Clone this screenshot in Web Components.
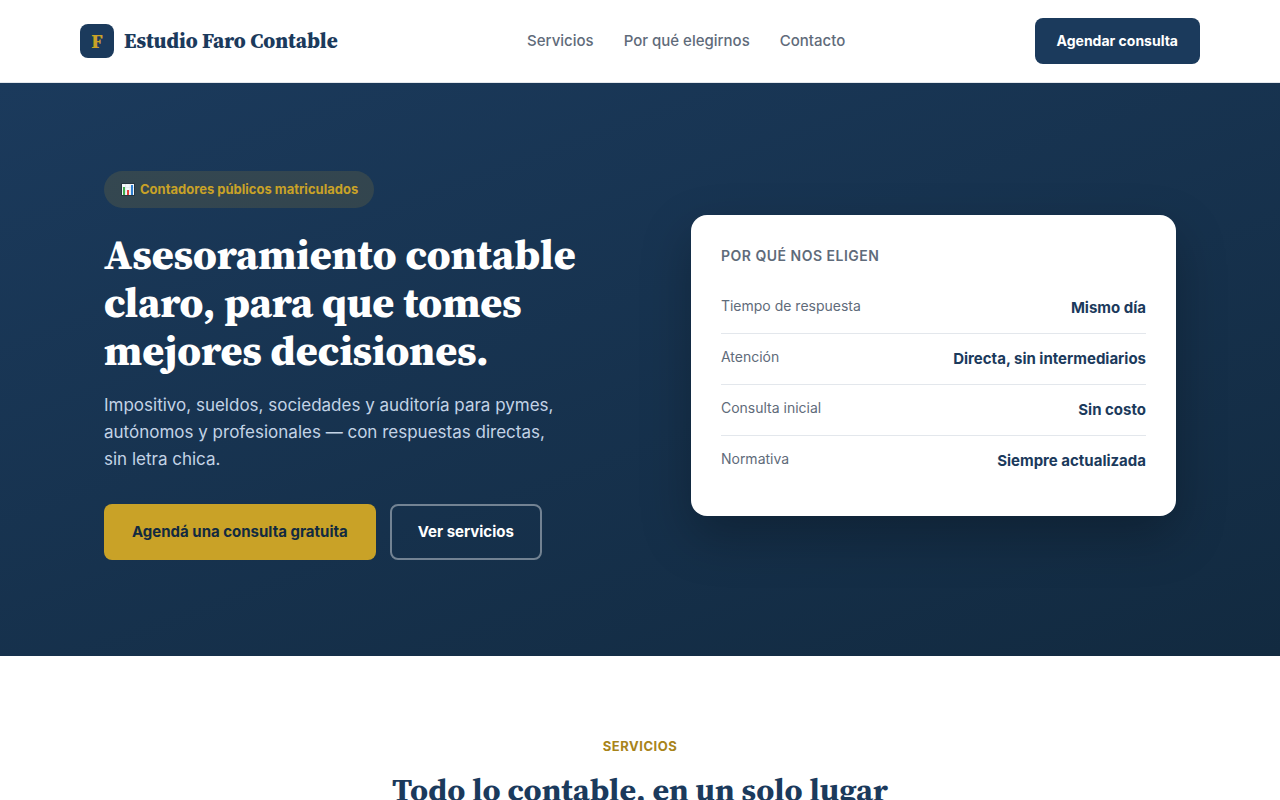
<!DOCTYPE html>
<html lang="es">
<head>
<meta charset="utf-8">
<meta name="viewport" content="width=device-width, initial-scale=1">
<title>Estudio Faro Contable</title>
<style>
  :root {
    --navy: #1b3a5c;
    --navy-dark: #122a40;
    --gold: #c9a227;
    --gold-dark: #a8841a;
    --muted: #5f6b7a;
    --line: #e3e7ec;
    --serif: 'Source Serif 4', 'Noto Serif CJK SC', 'Liberation Serif', serif;
  }
  body {
    margin: 0;
    background: #fff;
    color: var(--navy);
    font-family: Inter, 'Liberation Sans', sans-serif;
    font-size: 16px;
    line-height: 1.6;
  }
</style>
</head>
<body>
<site-header>
  <nav-link href="#servicios">Servicios</nav-link>
  <nav-link href="#elegirnos">Por qué elegirnos</nav-link>
  <nav-link href="#contacto">Contacto</nav-link>
  <link-button slot="action" href="#contacto" kind="small">Agendar consulta</link-button>
</site-header>
<main>
  <hero-banner>
    <hero-pill slot="pill">Contadores públicos matriculados</hero-pill>
    <span slot="title">Asesoramiento contable claro, para que tomes mejores decisiones.</span>
    <span slot="lead">Impositivo, sueldos, sociedades y auditoría para pymes, autónomos y profesionales — con respuestas directas, sin letra chica.</span>
    <link-button slot="actions" href="#contacto" kind="gold">Agendá una consulta gratuita</link-button>
    <link-button slot="actions" href="#servicios" kind="outline">Ver servicios</link-button>
    <info-card slot="aside" id="elegirnos" heading="Por qué nos eligen">
      <info-row label="Tiempo de respuesta">Mismo día</info-row>
      <info-row label="Atención">Directa, sin intermediarios</info-row>
      <info-row label="Consulta inicial">Sin costo</info-row>
      <info-row label="Normativa">Siempre actualizada</info-row>
    </info-card>
  </hero-banner>
  <page-section id="servicios" eyebrow="Servicios">Todo lo contable, en un solo lugar</page-section>
</main>

<script>
class SiteHeader extends HTMLElement {
  constructor() {
    super();
    this.attachShadow({ mode: 'open' });
    this.shadowRoot.innerHTML = `
      <style>
        :host {
          display: block;
          background: #fff;
          border-bottom: 1px solid var(--line);
        }
        header {
          max-width: 1120px;
          margin: 0 auto;
          padding: 18px 24px;
          display: flex;
          justify-content: space-between;
          align-items: center;
        }
        .brand {
          display: flex;
          align-items: center;
          gap: 10px;
          color: var(--navy);
          font-family: var(--serif);
          font-size: 21px;
          font-weight: 800;
          line-height: 32px;
          text-decoration: none;
        }
        .mark {
          display: grid;
          place-items: center;
          width: 34px;
          height: 34px;
          border-radius: 8px;
          background: var(--navy);
          color: var(--gold);
          font-size: 20px;
        }
        nav {
          display: flex;
          gap: 30px;
        }
      </style>
      <header>
        <a class="brand" href="#"><span class="mark">F</span><span>Estudio Faro Contable</span></a>
        <nav><slot></slot></nav>
        <slot name="action"></slot>
      </header>
    `;
  }
}

class NavLink extends HTMLElement {
  constructor() {
    super();
    this.attachShadow({ mode: 'open' });
    this.shadowRoot.innerHTML = `
      <style>
        :host { display: block; }
        a {
          color: var(--muted);
          font-size: 15px;
          font-weight: 500;
          text-decoration: none;
        }
        a:hover { color: var(--navy); }
      </style>
      <a><slot></slot></a>
    `;
  }

  connectedCallback() {
    this.shadowRoot.querySelector('a').href = this.getAttribute('href');
  }
}

class LinkButton extends HTMLElement {
  constructor() {
    super();
    this.attachShadow({ mode: 'open' });
    this.shadowRoot.innerHTML = `
      <style>
        :host { display: block; }
        a {
          display: block;
          border-radius: 8px;
          font-size: 15px;
          font-weight: 700;
          line-height: 24px;
          text-decoration: none;
          white-space: nowrap;
        }
        :host([kind="small"]) a {
          padding: 12px 22px;
          background: var(--navy);
          color: #fff;
          font-size: 14px;
          line-height: 22px;
        }
        :host([kind="gold"]) a {
          padding: 16px 28px;
          background: var(--gold);
          color: var(--navy-dark);
        }
        :host([kind="outline"]) a {
          padding: 14px 26px;
          border: 2px solid rgba(255, 255, 255, 0.4);
          color: #fff;
        }
      </style>
      <a><slot></slot></a>
    `;
  }

  connectedCallback() {
    this.shadowRoot.querySelector('a').href = this.getAttribute('href');
  }
}

class HeroPill extends HTMLElement {
  constructor() {
    super();
    this.attachShadow({ mode: 'open' });
    this.shadowRoot.innerHTML = `
      <style>
        :host {
          display: inline-flex;
          align-items: center;
          gap: 4px;
          padding: 8px 16px;
          border-radius: 20px;
          background: rgba(201, 162, 39, 0.15);
          color: var(--gold);
          font-size: 13px;
          font-weight: 700;
          line-height: 21px;
        }
        svg { display: block; }
      </style>
      <svg width="16" height="16" viewBox="0 0 16 16" aria-hidden="true">
        <rect x="1" y="1" width="14" height="13" rx="1" fill="#26343f"/>
        <rect x="2" y="2" width="12" height="11" fill="#f4f7fa"/>
        <path d="M2 5.5h12M2 9h12M5.5 2v11M10 2v11" stroke="#d5dde4" stroke-width=".5"/>
        <rect x="3" y="5" width="2" height="8" fill="#3faa4a"/>
        <rect x="7" y="8" width="2" height="5" fill="#e0403a"/>
        <rect x="11" y="3" width="2" height="10" fill="#2f7fd0"/>
      </svg>
      <span><slot></slot></span>
    `;
  }
}

class HeroBanner extends HTMLElement {
  constructor() {
    super();
    this.attachShadow({ mode: 'open' });
    this.shadowRoot.innerHTML = `
      <style>
        :host {
          display: block;
          background: linear-gradient(160deg, var(--navy) 0%, var(--navy-dark) 100%);
          color: #fff;
        }
        .inner {
          box-sizing: border-box;
          max-width: 1120px;
          margin: 0 auto;
          padding: 88px 24px 96px;
          display: grid;
          grid-template-columns: 1fr 0.9fr;
          gap: 48px;
          align-items: center;
        }
        .pill { display: flex; }
        h1 {
          margin: 22px 0 18px;
          font-family: var(--serif);
          font-size: 42px;
          font-weight: 800;
          line-height: 48px;
        }
        p {
          max-width: 460px;
          margin: 0 0 30px;
          color: #c3d3e6;
          font-size: 17px;
        }
        .actions {
          display: flex;
          flex-wrap: wrap;
          gap: 14px;
        }
        @media (max-width: 860px) {
          .inner { grid-template-columns: 1fr; }
        }
      </style>
      <div class="inner">
        <div>
          <div class="pill"><slot name="pill"></slot></div>
          <h1><slot name="title"></slot></h1>
          <p><slot name="lead"></slot></p>
          <div class="actions"><slot name="actions"></slot></div>
        </div>
        <slot name="aside"></slot>
      </div>
    `;
  }
}

class InfoCard extends HTMLElement {
  constructor() {
    super();
    this.attachShadow({ mode: 'open' });
    this.shadowRoot.innerHTML = `
      <style>
        :host {
          display: block;
          padding: 30px;
          border-radius: 16px;
          background: #fff;
          box-shadow: 0 20px 50px rgba(0, 0, 0, 0.25);
        }
        h2 {
          margin: 0 0 16px;
          color: var(--muted);
          font-size: 14px;
          font-weight: 600;
          line-height: 22px;
          letter-spacing: 0.5px;
          text-transform: uppercase;
        }
      </style>
      <h2></h2>
      <slot></slot>
    `;
  }

  connectedCallback() {
    this.shadowRoot.querySelector('h2').textContent = this.getAttribute('heading');
  }
}

class InfoRow extends HTMLElement {
  constructor() {
    super();
    this.attachShadow({ mode: 'open' });
    this.shadowRoot.innerHTML = `
      <style>
        :host {
          display: flex;
          justify-content: space-between;
          gap: 16px;
          padding: 13px 0;
          border-bottom: 1px solid var(--line);
        }
        :host(:last-of-type) { border-bottom: none; }
        .label {
          color: var(--muted);
          font-size: 14px;
          line-height: 20px;
        }
        .value {
          color: var(--navy);
          font-size: 15px;
          font-weight: 700;
          line-height: 24px;
        }
      </style>
      <span class="label"></span>
      <span class="value"><slot></slot></span>
    `;
  }

  connectedCallback() {
    this.shadowRoot.querySelector('.label').textContent = this.getAttribute('label');
  }
}

class PageSection extends HTMLElement {
  constructor() {
    super();
    this.attachShadow({ mode: 'open' });
    this.shadowRoot.innerHTML = `
      <style>
        :host {
          display: block;
          padding: 80px 24px;
          text-align: center;
        }
        .eyebrow {
          color: var(--gold-dark);
          font-size: 13px;
          font-weight: 700;
          line-height: 21px;
          letter-spacing: 0.5px;
          text-transform: uppercase;
        }
        h2 {
          margin: 10px 0 0;
          color: var(--navy);
          font-family: var(--serif);
          font-size: 32px;
          font-weight: 700;
          line-height: 46px;
        }
      </style>
      <div class="eyebrow"></div>
      <h2><slot></slot></h2>
    `;
  }

  connectedCallback() {
    this.shadowRoot.querySelector('.eyebrow').textContent = this.getAttribute('eyebrow');
  }
}

customElements.define('site-header', SiteHeader);
customElements.define('nav-link', NavLink);
customElements.define('link-button', LinkButton);
customElements.define('hero-pill', HeroPill);
customElements.define('hero-banner', HeroBanner);
customElements.define('info-card', InfoCard);
customElements.define('info-row', InfoRow);
customElements.define('page-section', PageSection);
</script>
</body>
</html>
